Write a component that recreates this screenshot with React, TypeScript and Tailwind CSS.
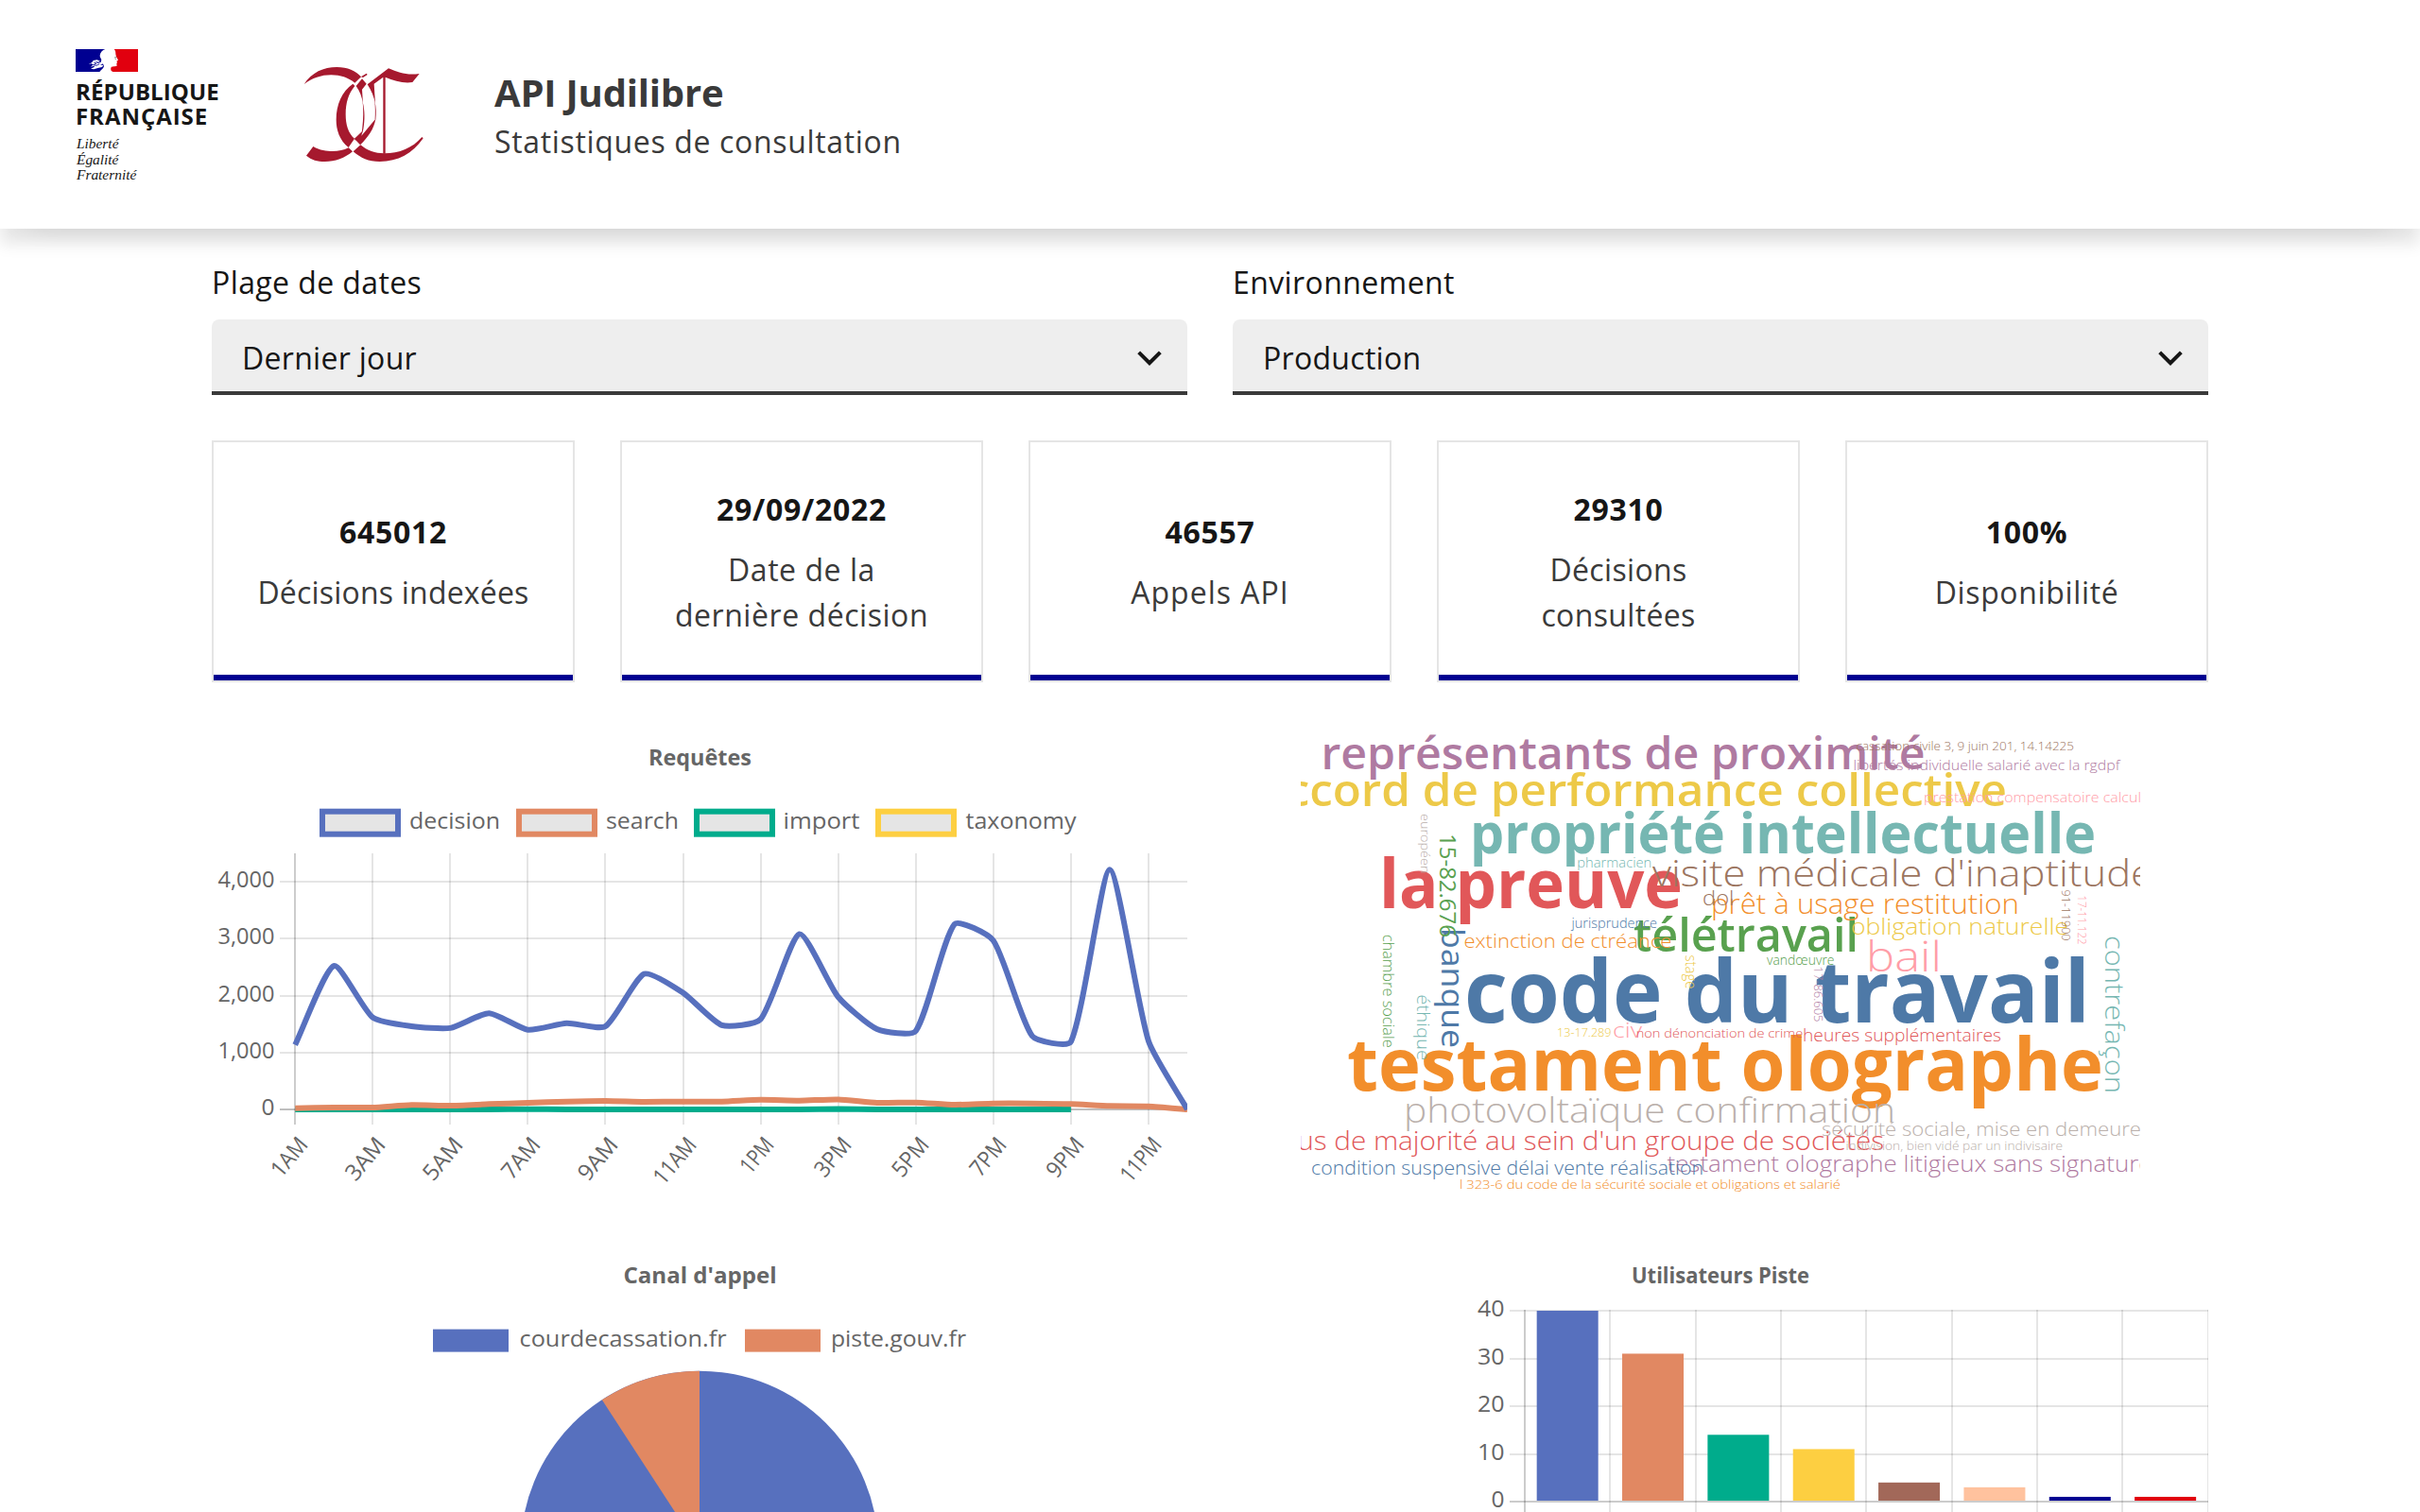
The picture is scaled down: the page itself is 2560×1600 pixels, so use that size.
import React from "react";

const FONT = "'Open Sans', 'Noto Sans', sans-serif";
const SERIF = "'Liberation Serif', serif";

/* ---------- Header ---------- */

function Flag() {
  return (
    <svg className="block h-[24px] w-[66px]" viewBox="0 0 198 72">
      <rect width="198" height="72" fill="#fff" />
      <path
        d="M0 0H94C84 3 79 10 77 20C76 26 82 29 82 35C79 38 80 42 86 44L90 54C88 62 82 64 76 72H0Z"
        fill="#000091"
      />
      <path d="M122 0H198V72H122C112 71 111 66 112 59C114 53 122 56 131 53L130 46L132 42L130 38L135 35C132 28 127 22 127 14C127 8 126 4 122 0Z" fill="#e1000f" />
      <path
        d="M41 48L52 42L56 36L68 34L78 38L72 41L62 39L70 45L84 40L88 46L78 50L88 51L84 57L70 60L58 64L48 62L60 56L58 53L48 56L56 49L50 46Z"
        fill="#fff"
      />
      <path d="M58 42L66 46L56 50L66 52L76 47" fill="none" stroke="#000091" strokeWidth="2.4" />
      <path d="M123 27L130 25M125 31L129 31" stroke="#555" strokeWidth="2" />
    </svg>
  );
}

function CourtLogo() {
  return (
    <svg className="block h-[102px] w-[128px]" viewBox="844 150 384 306" fill="#a6192e">
      <path d="M846 207C870 170 908 153 950 153C984 153 1010 164 1027 184L1007 203C985 186 962 178 932 178C900 178 872 188 846 207Z" />
      <path d="M1001 206L1007 213C986 238 978 268 978 302C978 336 986 362 1006 380L987 408C958 384 948 352 948 320C948 272 966 230 1001 206Z" />
      <path d="M1021 187L1044 173L1047 177L1032 187L1030 184Z" />
      <path d="M1011 213L1030 190L1044 206L1030 224L1033 270C1030 248 1023 230 1011 213Z" />
      <path d="M1032 264C1039 290 1039 320 1034 350L1028 372L1031 345C1034 318 1035 290 1032 264Z" />
      <path d="M1047 208L1114 157C1146 170 1172 180 1212 174L1190 201C1162 206 1132 196 1104 185V428H1097V185L1068 206L1072 270C1068 248 1060 228 1047 208Z" />
      <path d="M1070 262C1075 280 1075 300 1073 320L1071 318C1072 300 1072 280 1070 262Z" />
      <path d="M1005 381L1031 356L1028 371L1073 317C1068 350 1048 376 1024 400L1012 387Z" />
      <path d="M987 409L1000 421C976 442 944 453 912 453C888 453 870 448 853 434L875 405C896 418 918 420 936 420C956 420 972 417 987 409Z" />
      <path d="M1002 421L1025 400C1046 418 1072 427 1100 427C1148 427 1190 410 1220 375L1224 379C1190 428 1144 453 1086 453C1050 453 1026 442 1002 421Z" />
    </svg>
  );
}

function Header() {
  return (
    <header className="relative z-10 flex h-[242px] items-start bg-white pl-[80px] shadow-[0_16px_16px_0_rgba(0,0,0,0.1),0_16px_32px_-32px_rgba(0,0,0,0.32)]">
      <div className="w-[241px] pt-[52px]">
        <Flag />
        <div className="mt-[8px] text-[24px] font-bold leading-[26px] text-[#161616]">
          <p className="tracking-[0.1px]">RÉPUBLIQUE</p>
          <p className="tracking-[0.95px]">FRANÇAISE</p>
        </div>
        <p className="ml-px mt-[8px] text-[15.4px] italic leading-[16.5px] text-[#161616]" style={{ fontFamily: SERIF }}>
          Liberté
          <br />
          Égalité
          <br />
          Fraternité
        </p>
      </div>
      <div className="w-[202px] pt-[70px]">
        <CourtLogo />
      </div>
      <div className="pt-[70px] text-[#3a3a3a]">
        <p className="text-[40px] font-bold leading-[56px] tracking-[-0.2px]">API Judilibre</p>
        <p className="text-[32px] leading-[48px] tracking-[0.66px]">Statistiques de consultation</p>
      </div>
    </header>
  );
}

/* ---------- Filters ---------- */

function Select({ label, value }: { label: string; value: string }) {
  return (
    <div>
      <p className="text-[32px] leading-[48px] tracking-[0.4px] text-[#161616]">{label}</p>
      <div className="mt-[15px] flex h-[80px] items-center justify-between rounded-t-[8px] border-b-4 border-[#3a3a3a] bg-[#eee] pl-8 pr-4 pt-[5px]">
        <span className="text-[32px] leading-[48px] tracking-[0.3px] text-[#161616]">{value}</span>
        <svg className="h-[48px] w-[48px]" viewBox="0 0 24 24" fill="#161616">
          <path d="M12 13.172l4.95-4.95 1.414 1.414L12 16 5.636 9.636 7.05 8.222z" />
        </svg>
      </div>
    </div>
  );
}

/* ---------- Key figures ---------- */

const FIGURES = [
  { value: "645012", label: "Décisions indexées", tracking: "tracking-[0.2px]" },
  { value: "29/09/2022", label: "Date de la dernière décision", tracking: "tracking-[0.55px]" },
  { value: "46557", label: "Appels API", tracking: "tracking-[1px]" },
  { value: "29310", label: "Décisions consultées", tracking: "tracking-[0.35px]" },
  { value: "100%", label: "Disponibilité", tracking: "tracking-[0.65px]" },
];

function Figure({ value, label, tracking }: { value: string; label: string; tracking: string }) {
  return (
    <div className="flex h-[256px] flex-col border-2 border-[#e5e5e5]">
      <div className="flex flex-1 flex-col items-center justify-center px-[44px] pt-[7px] text-center text-[32px] leading-[48px]">
        <p className="font-bold tracking-[0.7px] text-[#161616]">{value}</p>
        <p className={`mt-4 text-[#3a3a3a] ${tracking}`}>{label}</p>
      </div>
      <div className="h-[6px] bg-[#000091]" />
    </div>
  );
}

/* ---------- Shared chart text ---------- */

type LabelProps = {
  x: number;
  y: number;
  w: number;
  children: string;
  size?: number;
  weight?: number;
  fill?: string;
};

/* Left-anchored text fitted to the width w. */
function Label({ x, y, w, children, size = 24, weight = 400, fill = "#666" }: LabelProps) {
  return (
    <text x={x} y={y} textLength={w} lengthAdjust="spacingAndGlyphs" fontSize={size} fontWeight={weight} fill={fill}>
      {children}
    </text>
  );
}

/* ---------- Line chart ---------- */

const X0 = 312.2;
const STEP = 41.035;
const DECISION = [1134, 2520, 1615, 1460, 1430, 1690, 1400, 1515, 1460, 2380, 2050, 1480, 1585, 3080, 1975, 1410, 1378, 3255, 2965, 1290, 1190, 4210, 1200, 0];
const SEARCH = [22, 33, 33, 78, 66, 94, 116, 138, 149, 133, 138, 138, 170, 155, 176, 116, 122, 83, 105, 105, 94, 61, 55, 0];
const IMPORT = [0, 0, 0, 0, 0, 0, 6, 0, 0, 0, 0, 0, 0, 0, 10, 0, 0, 0, 0, 0, 0];

function spline(values: number[]) {
  const p = values.map((v, i) => [X0 + i * STEP, 1174 - v * 0.06025]);
  const t = 0.2;
  const ctrl = p.map((c, i) => {
    const a = p[Math.max(0, i - 1)];
    const b = p[Math.min(p.length - 1, i + 1)];
    const d1 = Math.hypot(c[0] - a[0], c[1] - a[1]);
    const d2 = Math.hypot(b[0] - c[0], b[1] - c[1]);
    const fa = (t * d1) / (d1 + d2);
    const fb = (t * d2) / (d1 + d2);
    const clamp = (y: number) => Math.min(1174, y);
    return {
      before: [c[0] - fa * (b[0] - a[0]), clamp(c[1] - fa * (b[1] - a[1]))],
      after: [c[0] + fb * (b[0] - a[0]), clamp(c[1] + fb * (b[1] - a[1]))],
    };
  });
  return p
    .map((c, i) => (i === 0 ? `M${c[0]} ${c[1]}` : `C${ctrl[i - 1].after.join(" ")} ${ctrl[i].before.join(" ")} ${c[0]} ${c[1]}`))
    .join("");
}

const LINE_LEGEND = [
  { x: 338, tx: 433, w: 96, text: "decision", color: "#5770be" },
  { x: 546, tx: 641, w: 77, text: "search", color: "#e18862" },
  { x: 734, tx: 828.5, w: 81, text: "import", color: "#00ac8c" },
  { x: 926, tx: 1021.5, w: 117, text: "taxonomy", color: "#fdcf41" },
];

const HOURS: [string, number][] = [
  ["1AM", 46], ["3AM", 51], ["5AM", 51], ["7AM", 49], ["9AM", 51], ["11AM", 56],
  ["1PM", 41], ["3PM", 46], ["5PM", 46], ["7PM", 45], ["9PM", 47], ["11PM", 53],
];

function LineChart() {
  return (
    <svg className="block h-[516px] w-[1032px]" viewBox="224 770 1032 516" fontFamily={FONT}>
      <Label x={686} y={810.3} w={109} weight={700}>Requêtes</Label>
      {LINE_LEGEND.map((l) => (
        <g key={l.text}>
          <rect x={l.x + 3} y={858.7} width={80} height={24} fill="#e5e5e5" stroke={l.color} strokeWidth={6} />
          <Label x={l.tx} y={877} w={l.w}>{l.text}</Label>
        </g>
      ))}
      {[0, 1000, 2000, 3000, 4000].map((v) => {
        const y = Math.round(1174 - v * 0.06025);
        return (
          <g key={v}>
            <path d={`M296 ${y}H1256`} stroke="#000" strokeOpacity={v === 0 ? 0.25 : 0.1} strokeWidth={2} />
            <Label x={v ? 230.5 : 276.5} y={y + 6} w={v ? 60 : 14}>{v.toLocaleString("en-US")}</Label>
          </g>
        );
      })}
      {HOURS.map(([h, w], i) => {
        const x = Math.round(X0 + i * 2 * STEP);
        return (
          <g key={h}>
            <path d={`M${x} 903V1190`} stroke="#000" strokeOpacity={i ? 0.1 : 0.2} strokeWidth={2} />
            <g transform={`translate(${x + 15} 1212) rotate(-50)`}>
              <Label x={-w} y={0} w={w}>{h}</Label>
            </g>
          </g>
        );
      })}
      <g fill="none" strokeWidth={6}>
        <path d={spline(IMPORT)} stroke="#00ac8c" />
        <path d={spline(SEARCH)} stroke="#e18862" />
        <path d={spline(DECISION)} stroke="#5770be" />
      </g>
    </svg>
  );
}

/* ---------- Word cloud ---------- */

type Word = [text: string, x: number, y: number, w: number, size: number, weight: number, color: string];

const WORDS: Word[] = [
  ["code du travail", 1549, 1082, 662, 91, 700, "#4e79a7"],
  ["testament olographe", 1425, 1154, 800, 77, 700, "#f28e2b"],
  ["la preuve", 1459, 961, 321, 71, 700, "#e15759"],
  ["propriété intellectuelle", 1555, 903, 662, 59, 700, "#76b7b2"],
  ["télétravail", 1728, 1007, 238, 48, 600, "#59a14f"],
  ["accord de performance collective", 1332, 852.7, 791, 47, 600, "#edc948"],
  ["représentants de proximité", 1397.5, 813.7, 639, 47, 600, "#af7aa1"],
  ["bail", 1974, 1027.7, 80, 45, 300, "#ff9da7"],
  ["visite médicale d'inaptitude", 1748, 938, 530, 39, 300, "#9c755f"],
  ["photovoltaïque confirmation", 1485, 1187.7, 520, 36, 300, "#bab0ab"],
  ["prêt à usage restitution", 1810, 966.7, 326, 29, 300, "#f28e2b"],
  ["abus de majorité au sein d'un groupe de sociétés", 1339, 1216.7, 654, 27, 300, "#e15759"],
  ["obligation naturelle", 1958, 988.7, 230, 24.5, 300, "#edc948"],
  ["testament olographe litigieux sans signature", 1763.5, 1240.3, 513, 24, 300, "#af7aa1"],
  ["dol", 1801, 958, 33.5, 22, 300, "#9c755f"],
  ["civ", 1706, 1097.7, 31, 22, 300, "#ff9da7"],
  ["sécurité sociale, mise en demeure", 1927, 1201.7, 338, 20.5, 300, "#bab0ab"],
  ["condition suspensive délai vente réalisation", 1387, 1242.7, 415, 19.5, 300, "#4e79a7"],
  ["extinction de ctréance", 1548.5, 1002.7, 220, 19.5, 300, "#f28e2b"],
  ["heures supplémentaires", 1907, 1101.7, 210, 18, 300, "#e15759"],
  ["prestation compensatoire calcul", 2035, 849.3, 230, 15, 300, "#ff9da7"],
  ["libertés individuelle salarié avec la rgdpf", 1960.5, 815, 282, 15, 300, "#af7aa1"],
  ["jurisprudence", 1662.5, 982.3, 90.5, 14, 300, "#4e79a7"],
  ["pharmacien", 1668.3, 918, 79, 14, 300, "#76b7b2"],
  ["vandœuvre", 1869, 1021, 71.5, 14, 300, "#59a14f"],
  ["non dénonciation de crime", 1730.7, 1098, 176.5, 13.5, 300, "#e15759"],
  ["l 323-6 du code de la sécurité sociale et obligations et salarié", 1544, 1258, 403, 13.5, 300, "#f28e2b"],
  ["13-17.289", 1647, 1097, 57.5, 13, 300, "#edc948"],
  ["cassation civile 3, 9 juin 201, 14.14225", 1963.5, 794, 230.5, 12.5, 300, "#9c755f"],
  ["indivision, bien vidé par un indivisaire", 1952.5, 1217, 229.5, 12.5, 300, "#bab0ab"],
];

/* Words that read downwards: x is the baseline, y the top end. */
const VERTICAL_WORDS: Word[] = [
  ["banque", 1525.3, 982, 127, 32, 400, "#4e79a7"],
  ["contrefaçon", 2227, 990, 167, 27, 300, "#76b7b2"],
  ["15-82.676", 1523.3, 882, 110, 23.5, 400, "#59a14f"],
  ["éthique", 1499.3, 1052.3, 70, 18, 300, "#76b7b2"],
  ["stage", 1783.3, 1010.5, 36, 15.5, 300, "#edc948"],
  ["chambre sociale", 1463, 988.7, 120, 15.5, 300, "#59a14f"],
  ["européen", 1503, 861, 63.5, 13.5, 300, "#bab0ab"],
  ["17-86.605", 1919, 1022.5, 59, 12.5, 300, "#af7aa1"],
  ["91-11900", 2181.3, 941.5, 54, 12.5, 300, "#9c755f"],
  ["17-11.122", 2198, 947.5, 52, 12.5, 300, "#ff9da7"],
];

function WordCloud() {
  return (
    <svg className="block h-[516px] w-[888px] overflow-hidden" viewBox="1376 770 888 516" fontFamily={FONT}>
      {WORDS.map(([t, x, y, w, size, weight, color]) => (
        <Label key={t} x={x} y={y} w={w} size={size} weight={weight} fill={color}>{t}</Label>
      ))}
      {VERTICAL_WORDS.map(([t, x, y, w, size, weight, color]) => (
        <g key={t} transform={`translate(${x} ${y}) rotate(90)`}>
          <Label x={0} y={0} w={w} size={size} weight={weight} fill={color}>{t}</Label>
        </g>
      ))}
    </svg>
  );
}

/* ---------- Pie chart ---------- */

function PieChart() {
  const cx = 740;
  const cy = 1639.9;
  const r = 189.2;
  const a = (33.05 * Math.PI) / 180;
  return (
    <svg className="block h-[516px] w-[1032px]" viewBox="224 1318 1032 516" fontFamily={FONT}>
      <Label x={659.5} y={1358.3} w={162} weight={700}>Canal d'appel</Label>
      <rect x={458} y={1406.6} width={80} height={24} fill="#5770be" />
      <Label x={549.5} y={1425.2} w={219}>courdecassation.fr</Label>
      <rect x={788} y={1406.6} width={80} height={24} fill="#e18862" />
      <Label x={879} y={1425.2} w={143}>piste.gouv.fr</Label>
      <circle cx={cx} cy={cy} r={r} fill="#5770be" />
      <path d={`M${cx} ${cy}L${cx - r * Math.sin(a)} ${cy - r * Math.cos(a)}A${r} ${r} 0 0 1 ${cx} ${cy - r}Z`} fill="#e18862" />
    </svg>
  );
}

/* ---------- Bar chart ---------- */

const BARS: [number, string][] = [
  [40, "#5770be"], [31, "#e18862"], [14, "#00ac8c"], [11, "#fdcf41"],
  [4, "#a26859"], [3, "#ffc29e"], [1, "#000091"], [1, "#e1000f"],
];

function BarChart() {
  const left = 1613;
  const pitch = 90.35;
  return (
    <svg className="block h-[516px] w-[1032px]" viewBox="1304 1318 1032 516" fontFamily={FONT}>
      <Label x={1726} y={1358.3} w={188} weight={700}>Utilisateurs Piste</Label>
      {[40, 30, 20, 10, 0].map((v) => {
        const y = Math.round(1589 - v * 5.05);
        return (
          <g key={v}>
            <path d={`M1597 ${y}H2336`} stroke="#000" strokeOpacity={v ? 0.1 : 0.2} strokeWidth={2} />
            <Label x={v ? 1563 : 1577.5} y={y + 5.7} w={v ? 28.5 : 14}>{String(v)}</Label>
          </g>
        );
      })}
      {[0, 1, 2, 3, 4, 5, 6, 7, 8].map((i) => (
        <path key={i} d={`M${Math.round(left + i * pitch)} 1386V1834`} stroke="#000" strokeOpacity={i ? 0.1 : 0.2} strokeWidth={2} />
      ))}
      {BARS.map(([v, color], i) => (
        <rect key={i} x={left + (i + 0.5) * pitch - 32.5} y={1589 - v * 5.05} width={65} height={v * 5.05 - 1} fill={color} />
      ))}
    </svg>
  );
}

/* ---------- Page ---------- */

export default function App() {
  return (
    <div className="h-[1600px] w-[2560px] overflow-hidden bg-white" style={{ fontFamily: FONT }}>
      <Header />
      <main className="flex flex-col px-[224px] pt-[33px]">
        <section className="grid grid-cols-2 gap-x-12">
          <Select label="Plage de dates" value="Dernier jour" />
          <Select label="Environnement" value="Production" />
        </section>
        <section className="mt-12 grid grid-cols-5 gap-x-12">
          {FIGURES.map((f) => (
            <Figure key={f.label} {...f} />
          ))}
        </section>
        <section className="mt-12 grid grid-cols-2 gap-x-12 gap-y-8">
          <LineChart />
          <div className="flex justify-center">
            <WordCloud />
          </div>
          <PieChart />
          <BarChart />
        </section>
      </main>
    </div>
  );
}
